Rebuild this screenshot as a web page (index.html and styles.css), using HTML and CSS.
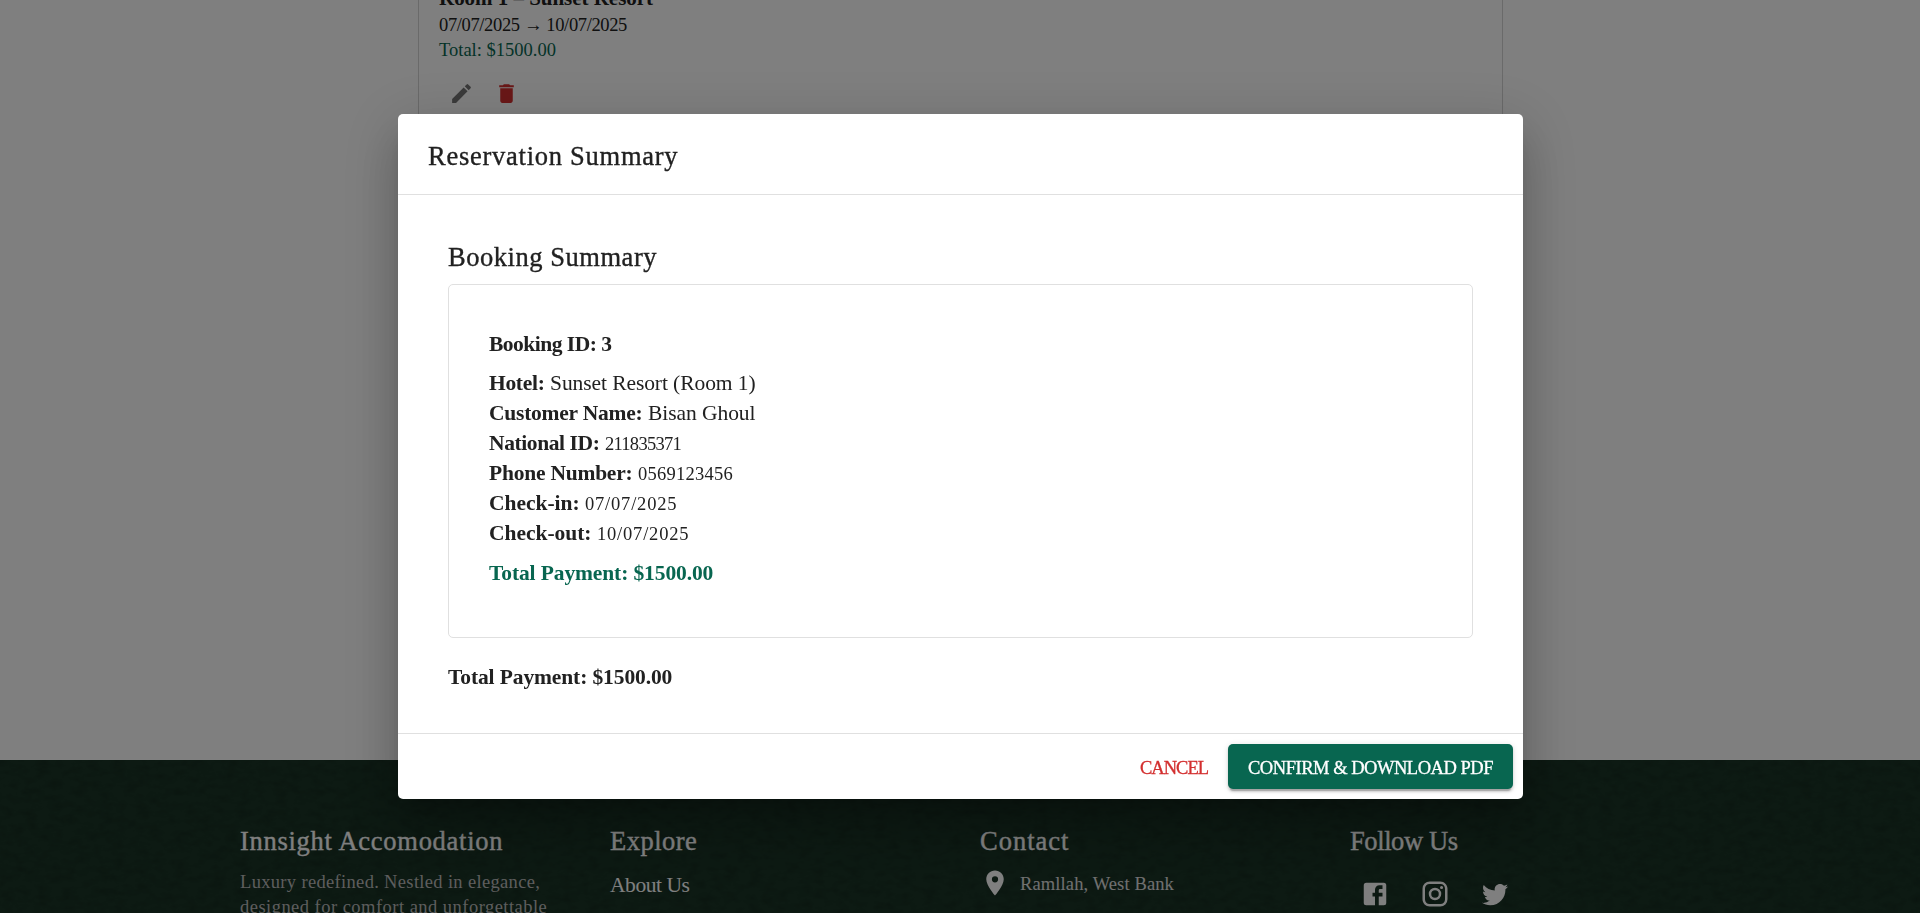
FILE: index.html
```
<!DOCTYPE html>
<html lang="en">
<head>
<meta charset="utf-8">
<title>Innsight Accomodation</title>
<link rel="stylesheet" href="styles.css">
</head>
<body>
<div class="page">
  <main class="main">
    <section class="reservation">
      <h3 class="reservation-title">Room 1 – Sunset Resort</h3>
      <p class="reservation-dates">07/07/2025 → 10/07/2025</p>
      <p class="reservation-total">Total: $1500.00</p>
      <div class="reservation-actions">
        <button class="icon-button edit" aria-label="Edit"><svg viewBox="0 0 24 24"><path d="M3 17.25V21h3.75L17.81 9.94l-3.75-3.75L3 17.25zM20.71 7.04a1 1 0 0 0 0-1.41l-2.34-2.34a1 1 0 0 0-1.41 0l-1.83 1.83 3.75 3.75 1.83-1.83z"/></svg></button>
        <button class="icon-button delete" aria-label="Delete"><svg viewBox="0 0 24 24"><path d="M6 19c0 1.1.9 2 2 2h8c1.1 0 2-.9 2-2V7H6v12zM19 4h-3.5l-1-1h-5l-1 1H5v2h14V4z"/></svg></button>
      </div>
    </section>
  </main>
  <footer class="footer">
    <svg class="footer-texture" aria-hidden="true"><filter id="grain"><feTurbulence type="fractalNoise" baseFrequency="0.08 0.14" numOctaves="3" seed="4"/><feColorMatrix values="0 0 0 0 0  0 0 0 0 0  0 0 0 0 0  1.6 0 0 0 -0.7"/></filter><rect width="100%" height="100%" filter="url(#grain)"/></svg>
    <div class="footer-columns">
      <div>
        <h4 class="brand">Innsight Accomodation</h4>
        <p class="about"><span class="about-first">Luxury redefined. Nestled in elegance,</span><br><span class="about-second">designed for comfort and unforgettable</span></p>
      </div>
      <div>
        <h4 class="explore">Explore</h4>
        <a class="footer-link">About Us</a>
      </div>
      <div>
        <h4 class="contact">Contact</h4>
        <div class="address"><svg viewBox="0 0 24 24"><path d="M12 2C8.13 2 5 5.13 5 9c0 5.25 7 13 7 13s7-7.75 7-13c0-3.87-3.13-7-7-7zm0 9.5a2.5 2.5 0 0 1 0-5 2.5 2.5 0 0 1 0 5z"/></svg><span>Ramllah, West Bank</span></div>
      </div>
      <div>
        <h4 class="follow">Follow Us</h4>
        <div class="social">
          <svg viewBox="0 0 24 24"><path d="M5 3h14a2 2 0 0 1 2 2v14a2 2 0 0 1-2 2H5a2 2 0 0 1-2-2V5a2 2 0 0 1 2-2m13 2h-2.5A3.5 3.5 0 0 0 12 8.5V11h-2v3h2v7h3v-7h3v-3h-3V9a1 1 0 0 1 1-1h2V5z"/></svg>
          <svg viewBox="0 0 24 24"><path d="M7.8 2h8.4C19.4 2 22 4.6 22 7.8v8.4a5.8 5.8 0 0 1-5.8 5.8H7.8C4.6 22 2 19.4 2 16.2V7.8A5.8 5.8 0 0 1 7.8 2m-.2 2A3.6 3.6 0 0 0 4 7.6v8.8C4 18.39 5.61 20 7.6 20h8.8a3.6 3.6 0 0 0 3.6-3.6V7.6C20 5.61 18.39 4 16.4 4H7.6m9.65 1.5a1.25 1.25 0 0 1 1.25 1.25A1.25 1.25 0 0 1 17.25 8 1.25 1.25 0 0 1 16 6.75a1.25 1.25 0 0 1 1.25-1.25M12 7a5 5 0 0 1 5 5 5 5 0 0 1-5 5 5 5 0 0 1-5-5 5 5 0 0 1 5-5m0 2a3 3 0 0 0-3 3 3 3 0 0 0 3 3 3 3 0 0 0 3-3 3 3 0 0 0-3-3z"/></svg>
          <svg viewBox="0 0 24 24"><path d="M22.46 6c-.77.35-1.6.58-2.46.69.88-.53 1.56-1.37 1.88-2.38-.83.5-1.75.85-2.72 1.05C18.37 4.5 17.26 4 16 4c-2.35 0-4.27 1.92-4.27 4.29 0 .34.04.67.11.98C8.28 9.09 5.11 7.38 3 4.79c-.37.63-.58 1.37-.58 2.15 0 1.49.75 2.81 1.91 3.56-.71 0-1.37-.2-1.95-.5v.03c0 2.08 1.48 3.82 3.44 4.21a4.22 4.22 0 0 1-1.93.07 4.28 4.28 0 0 0 4 2.98 8.521 8.521 0 0 1-5.33 1.84c-.34 0-.68-.02-1.02-.06C3.44 20.29 5.7 21 8.12 21 16 21 20.33 14.46 20.33 8.79c0-.19 0-.37-.01-.56.84-.6 1.56-1.36 2.14-2.23z"/></svg>
        </div>
      </div>
    </div>
  </footer>
</div>
<div class="backdrop">
  <div class="dialog" role="dialog">
    <h2 class="dialog-title">Reservation Summary</h2>
    <div class="dialog-content">
      <h3 class="summary-title">Booking Summary</h3>
      <div class="summary-card">
        <p class="booking-id">Booking ID: 3</p>
        <p class="row hotel"><b>Hotel:</b><span>Sunset Resort (Room 1)</span></p>
        <p class="row customer"><b>Customer Name:</b><span>Bisan Ghoul</span></p>
        <p class="row national"><b>National ID:</b><span>211835371</span></p>
        <p class="row phone"><b>Phone Number:</b><span>0569123456</span></p>
        <p class="row checkin"><b>Check-in:</b><span>07/07/2025</span></p>
        <p class="row checkout"><b>Check-out:</b><span>10/07/2025</span></p>
        <p class="total total-green">Total Payment: $1500.00</p>
      </div>
      <p class="total">Total Payment: $1500.00</p>
    </div>
    <div class="dialog-actions">
      <button class="cancel">CANCEL</button>
      <button class="confirm">CONFIRM &amp; DOWNLOAD PDF</button>
    </div>
  </div>
</div>
</body>
</html>
```
FILE: styles.css
```
* { box-sizing: border-box; }
body { margin: 0; overflow: hidden; color: #212121; background: #fff; font-family: "Liberation Serif", "Times New Roman", serif; }
h2, h3, h4, p { margin: 0; font-weight: 400; white-space: nowrap; }
button { border: 0; background: none; padding: 0; font-family: inherit; }
svg { display: block; fill: currentColor; }

.page { height: 913px; overflow: hidden; display: flex; flex-direction: column; }
.main { height: 760px; flex: none; overflow: hidden; display: flex; justify-content: center; align-items: flex-start; padding-left: 1px; }
.reservation { width: 1085px; height: 240px; margin-top: -38px; padding: 20px; border: 1px solid #d4d4d4; border-radius: 5px; }
.reservation-title { font-size: 21px; line-height: 30px; font-weight: 700; letter-spacing: -0.03px; }
.reservation-dates { font-size: 18.5px; line-height: 25px; letter-spacing: -0.361px; }
.reservation-total { font-size: 18.5px; line-height: 25px; color: #086650; }
.reservation-actions { display: flex; margin-top: 8px; }
.icon-button { width: 45px; height: 45px; display: flex; align-items: center; justify-content: center; }
.icon-button svg { width: 25px; height: 25px; }
.edit { color: #757575; }
.delete { color: #d32f2f; }

.footer { position: relative; flex: 1; background: #1a3426; color: #fff; overflow: hidden; }
.footer-texture { position: absolute; inset: 0; width: 100%; height: 100%; opacity: 0.2; }
.footer-columns { position: relative; display: grid; grid-template-columns: repeat(4, 370px); padding: 61px 0 0 240px; }
.footer h4 { font-size: 26.5px; line-height: 40px; -webkit-text-stroke: 0.35px; }
.brand { letter-spacing: 0.72px; }
.explore { letter-spacing: 0.5px; }
.contact { letter-spacing: 1px; }
.follow { letter-spacing: -0.4px; }
.about { margin-top: 9px; font-size: 18.5px; line-height: 25px; color: #bbb; }
.about-first { letter-spacing: 0.33px; }
.about-second { letter-spacing: 0.47px; }
.footer-link { display: block; margin-top: 9px; font-size: 21.5px; line-height: 30px; letter-spacing: -0.45px; }
.address { display: flex; gap: 10px; margin-top: 7px; font-size: 18.5px; line-height: 33px; letter-spacing: 0.12px; color: #e0e0e0; }
.address svg { width: 30px; height: 30px; color: #fff; }
.social { display: flex; gap: 30px; padding: 18px 0 0 10px; }
.social svg { width: 30px; height: 30px; }

.backdrop { position: fixed; inset: 0; display: flex; align-items: center; justify-content: center; padding-left: 1px; background: rgba(0, 0, 0, 0.5); }
.dialog { width: 1125px; height: 685px; display: flex; flex-direction: column; border-radius: 5px; background: #fff; box-shadow: 0 14px 19px -9px rgba(0,0,0,.2), 0 30px 47.5px 4px rgba(0,0,0,.14), 0 11px 57.5px 10px rgba(0,0,0,.12); }
.dialog-title { height: 81px; padding-left: 30px; border-bottom: 1px solid #e0e0e0; font-size: 26.5px; line-height: 84px; letter-spacing: 0.74px; -webkit-text-stroke: 0.35px; }
.dialog-content { flex: 1; padding: 42px 50px 0; }
.summary-title { margin-bottom: 7px; font-size: 26.5px; line-height: 40px; letter-spacing: 0.54px; -webkit-text-stroke: 0.35px; }
.summary-card { height: 354px; margin-bottom: 23px; padding: 40px; border: 1px solid #e0e0e0; border-radius: 5px; }
.booking-id { margin-bottom: 5px; font-size: 21.5px; line-height: 38px; font-weight: 700; letter-spacing: -0.5px; }
.row { display: flex; align-items: baseline; height: 30px; font-size: 21.5px; line-height: 30px; }
.row b { flex: none; }
.hotel b { width: 61px; letter-spacing: -0.3px; }
.hotel span { letter-spacing: -0.079px; }
.customer b { width: 159px; letter-spacing: -0.23px; }
.customer span { letter-spacing: -0.06px; }
.national b { width: 116px; letter-spacing: -0.4px; }
.national span { font-size: 18.5px; letter-spacing: -0.73px; }
.phone b { width: 149px; letter-spacing: -0.22px; }
.phone span { font-size: 18.5px; letter-spacing: 0.25px; }
.checkin b { width: 96px; letter-spacing: -0.03px; }
.checkout b { width: 108px; letter-spacing: -0.03px; }
.checkin span, .checkout span { font-size: 18.5px; letter-spacing: 0.8px; }
.total { font-size: 21.5px; line-height: 32px; font-weight: 700; letter-spacing: -0.11px; }
.total-green { margin-top: 9px; color: #086650; }
.dialog-actions { height: 66px; flex: none; display: flex; justify-content: flex-end; gap: 10px; padding: 10px; border-top: 1px solid #e0e0e0; }
.dialog-actions button { height: 45px; padding-top: 3px; font-size: 18.5px; border-radius: 5px; white-space: nowrap; -webkit-text-stroke: 0.3px; }
.cancel { width: 88px; color: #d32f2f; letter-spacing: -1px; }
.confirm { width: 285px; color: #fff; background: #086650; letter-spacing: -0.474px; box-shadow: 0 4px 1px -2px rgba(0,0,0,.2), 0 2.5px 2.5px rgba(0,0,0,.14), 0 1px 6px rgba(0,0,0,.12); }
```
